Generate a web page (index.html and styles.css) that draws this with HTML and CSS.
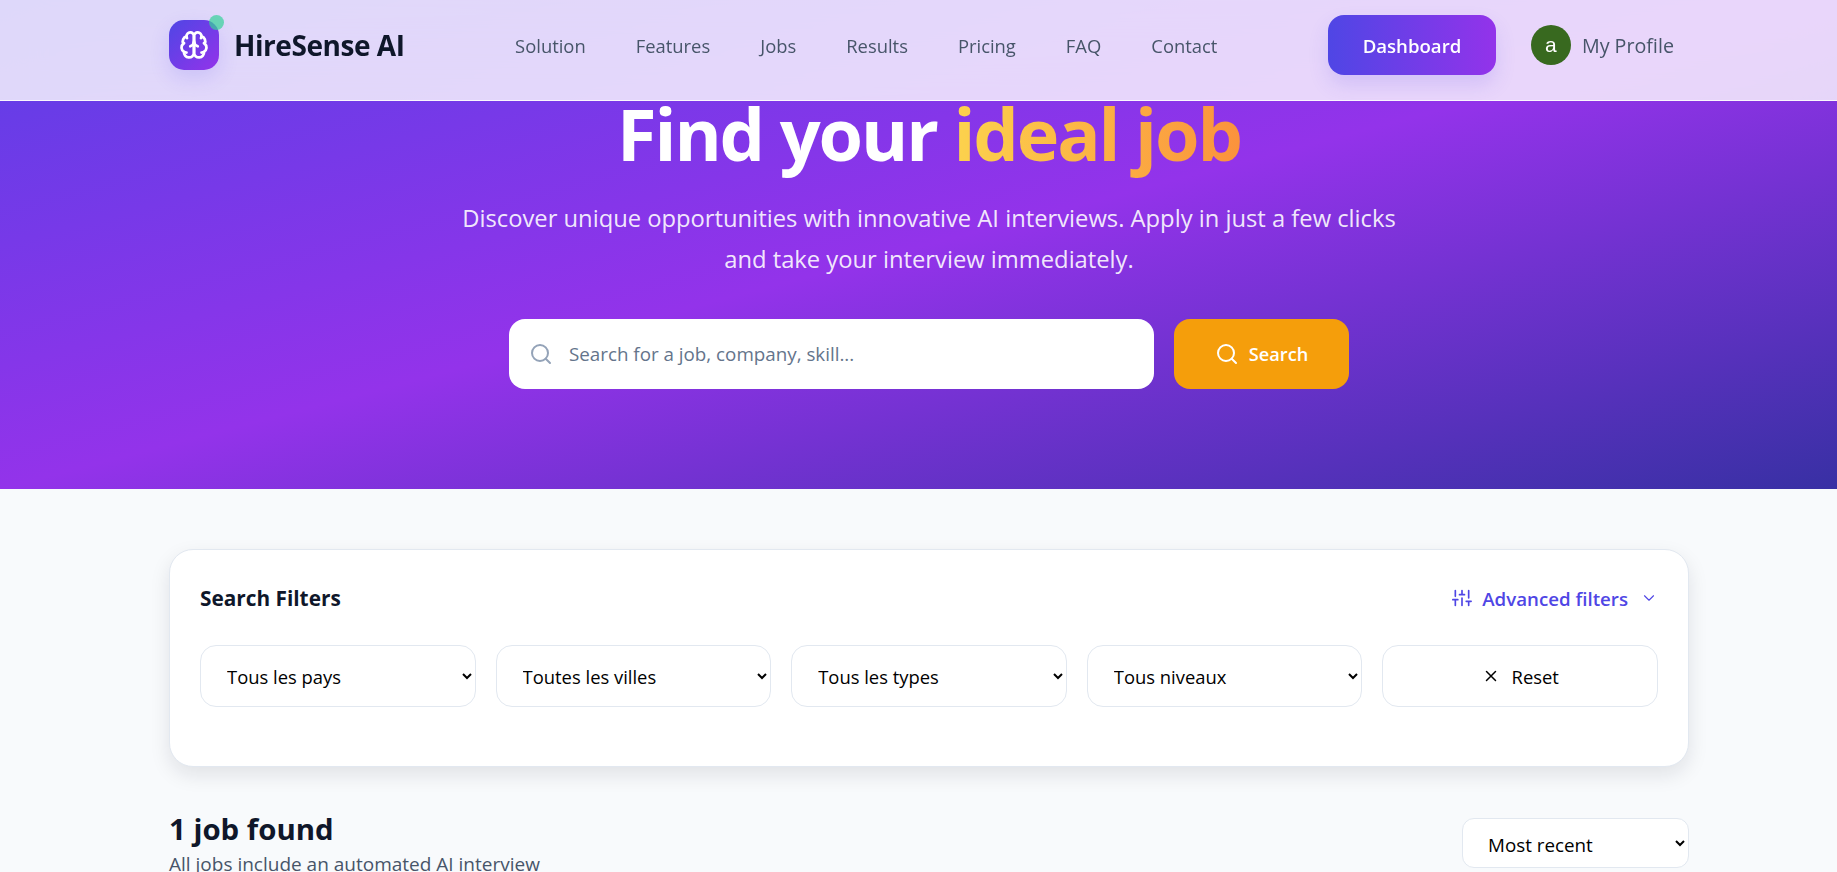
FILE: index.html
```html
<!DOCTYPE html>
<html lang="en">

<head>
    <meta charset="UTF-8">
    <title>HireSense AI - Jobs</title>
    <link rel="stylesheet" href="styles.css">
</head>

<body>
    <div class="page">
        <header class="navbar">
            <div class="nav-inner">
                <a class="brand" href="#">
                    <span class="brand-icon">
                        <svg class="brand-brain" viewBox="0 0 24 24">
                            <path d="M12 5a3 3 0 1 0-5.997.125 4 4 0 0 0-2.526 5.77 4 4 0 0 0 .556 6.588A4 4 0 1 0 12 18Z" />
                            <path d="M12 5a3 3 0 1 1 5.997.125 4 4 0 0 1 2.526 5.77 4 4 0 0 1-.556 6.588A4 4 0 1 1 12 18Z" />
                            <path d="M15 13a4.5 4.5 0 0 1-3-4 4.5 4.5 0 0 1-3 4" />
                            <path d="M17.599 6.5a3 3 0 0 0 .399-1.375" />
                            <path d="M6.003 5.125A3 3 0 0 0 6.401 6.5" />
                            <path d="M3.477 10.896a4 4 0 0 1 .585-.396" />
                            <path d="M19.938 10.5a4 4 0 0 1 .585.396" />
                            <path d="M6 18a4 4 0 0 1-1.967-.516" />
                            <path d="M19.967 17.484A4 4 0 0 1 18 18" />
                        </svg>
                        <span class="brand-dot"></span>
                    </span>
                    <span class="brand-name">HireSense AI</span>
                </a>
                <nav class="nav-links">
                    <a href="#">Solution</a>
                    <a href="#">Features</a>
                    <a href="#">Jobs</a>
                    <a href="#">Results</a>
                    <a href="#">Pricing</a>
                    <a href="#">FAQ</a>
                    <a href="#">Contact</a>
                </nav>
                <div class="nav-actions">
                    <a class="dashboard-btn" href="#">Dashboard</a>
                    <a class="profile" href="#">
                        <span class="avatar">a</span>
                        <span>My Profile</span>
                    </a>
                </div>
            </div>
        </header>

        <section class="hero">
            <h1>Find your <span class="hero-accent">ideal job</span></h1>
            <p>Discover unique opportunities with innovative AI interviews. Apply in just a few clicks and take your interview immediately.</p>
            <div class="search-row">
                <label class="search-box">
                    <svg class="icon search-box-icon" viewBox="0 0 24 24">
                        <circle cx="11" cy="11" r="8" />
                        <path d="m21 21-4.3-4.3" />
                    </svg>
                    <input type="text" placeholder="Search for a job, company, skill...">
                </label>
                <button class="search-btn">
                    <svg class="icon" viewBox="0 0 24 24">
                        <circle cx="11" cy="11" r="8" />
                        <path d="m21 21-4.3-4.3" />
                    </svg>
                    Search
                </button>
            </div>
        </section>

        <main class="content">
            <section class="filters-card">
                <div class="filters-head">
                    <h3>Search Filters</h3>
                    <button class="advanced-btn">
                        <svg class="icon" viewBox="0 0 24 24">
                            <path d="M4 21v-7M4 10V3M12 21v-9M12 8V3M20 21v-5M20 12V3M1 14h6M9 8h6M17 16h6" />
                        </svg>
                        Advanced filters
                        <svg class="icon chevron" viewBox="0 0 24 24">
                            <path d="m6 9 6 6 6-6" />
                        </svg>
                    </button>
                </div>
                <div class="filters-grid">
                    <select class="filter-control"><option>Tous les pays</option></select>
                    <select class="filter-control"><option>Toutes les villes</option></select>
                    <select class="filter-control"><option>Tous les types</option></select>
                    <select class="filter-control"><option>Tous niveaux</option></select>
                    <button class="filter-control reset-btn">
                        <svg class="icon" viewBox="0 0 24 24">
                            <path d="M18 6 6 18M6 6l12 12" />
                        </svg>
                        Reset
                    </button>
                </div>
            </section>

            <section class="results-head">
                <div>
                    <h2>1 job found</h2>
                    <p>All jobs include an automated AI interview</p>
                </div>
                <select class="sort-select"><option>Most recent</option></select>
            </section>
        </main>
    </div>
</body>

</html>
```

FILE: styles.css
```css
* {
    box-sizing: border-box;
}

html,
body {
    margin: 0;
    height: 872px;
    overflow: hidden;
}

body {
    background-color: #f8fafc;
    color: #0f172a;
    font-family: "Open Sans", "Noto Sans", sans-serif;
}

a {
    color: inherit;
    text-decoration: none;
}

.page {
    width: 1858px;
    position: relative;
}

.icon {
    width: 20px;
    height: 20px;
    fill: none;
    stroke: currentColor;
    stroke-width: 2;
    stroke-linecap: round;
    stroke-linejoin: round;
    flex-shrink: 0;
}

/* navbar */
.navbar {
    position: absolute;
    top: 0;
    left: 0;
    right: 0;
    z-index: 10;
    height: 101px;
    background-color: rgba(255, 255, 255, 0.8);
    backdrop-filter: blur(20px);
    border-bottom: 1px solid rgba(255, 255, 255, 0.8);
}

.nav-inner {
    width: 1520px;
    height: 100%;
    margin: 0 auto;
    padding-right: 15px;
    padding-bottom: 10px;
    display: flex;
    align-items: center;
    justify-content: space-between;
}

.brand {
    display: flex;
    align-items: center;
    gap: 15px;
}

.brand-icon {
    position: relative;
    width: 50px;
    height: 50px;
    border-radius: 15px;
    background: linear-gradient(135deg, #4f46e5, #9333ea);
    box-shadow: 0 8px 20px rgba(79, 70, 229, 0.15);
    display: flex;
    align-items: center;
    justify-content: center;
}

.brand-brain {
    width: 30px;
    height: 30px;
    fill: none;
    stroke: #fff;
    stroke-width: 2.2;
    stroke-linecap: round;
    stroke-linejoin: round;
}

.brand-dot {
    position: absolute;
    top: -5px;
    right: -5px;
    width: 15px;
    height: 15px;
    border-radius: 50%;
    background-color: #34d399;
    opacity: 0.7;
}

.brand-name {
    font-size: 28px;
    font-weight: 700;
    letter-spacing: -0.45px;
}

.nav-links {
    display: flex;
    gap: 50px;
    font-size: 18.4px;
    font-weight: 500;
    color: #475569;
}

.nav-actions {
    display: flex;
    align-items: center;
    gap: 35px;
}

.dashboard-btn {
    width: 168px;
    height: 60px;
    border-radius: 16px;
    background: linear-gradient(90deg, #4f46e5, #9333ea);
    box-shadow: 0 10px 20px rgba(79, 70, 229, 0.15);
    color: #fff;
    font-size: 18.6px;
    font-weight: 600;
    display: flex;
    align-items: center;
    justify-content: center;
}

.profile {
    display: flex;
    align-items: center;
    gap: 11px;
    font-size: 19.7px;
    font-weight: 500;
    color: #475569;
}

.avatar {
    width: 40px;
    height: 40px;
    border-radius: 50%;
    background-color: #38691f;
    color: #fff;
    font-family: "Liberation Sans", sans-serif;
    font-size: 21px;
    display: flex;
    align-items: center;
    justify-content: center;
}

/* hero */
.hero {
    height: 489px;
    padding-top: 93px;
    background: linear-gradient(to bottom right, #5b3fe6 0%, #9333ea 50%, #3730a3 100%);
    color: #fff;
    text-align: center;
}

.hero h1 {
    margin: 0;
    font-size: 72px;
    line-height: 80px;
    font-weight: 700;
    letter-spacing: -2.1px;
}

.hero-accent {
    background: linear-gradient(90deg, #fcd34d, #fb923c);
    -webkit-background-clip: text;
    background-clip: text;
    color: transparent;
}

.hero p {
    width: 960px;
    margin: 25px auto 0;
    font-size: 23.75px;
    line-height: 41px;
    color: rgba(255, 255, 255, 0.9);
}

.search-row {
    width: 840px;
    margin: 39px auto 0;
    display: flex;
    gap: 20px;
}

.search-box {
    flex: 1;
    height: 70px;
    padding: 0 20px;
    border-radius: 16px;
    background-color: #fff;
    display: flex;
    align-items: center;
    gap: 16px;
}

.search-box-icon {
    width: 24px;
    height: 24px;
    color: #94a3b8;
}

.search-box input {
    flex: 1;
    border: none;
    outline: none;
    padding: 0;
    font-family: inherit;
    font-size: 18.8px;
}

.search-box input::placeholder {
    color: #64748b;
}

.search-btn {
    width: 175px;
    height: 70px;
    border: none;
    border-radius: 16px;
    background-color: #f59e0b;
    color: #fff;
    font-family: inherit;
    font-size: 18.2px;
    font-weight: 600;
    display: flex;
    align-items: center;
    justify-content: center;
    gap: 10px;
}

.search-btn .icon {
    width: 24px;
    height: 24px;
}

/* filters */
.content {
    width: 1520px;
    margin: 0 auto;
    padding-top: 60px;
}

.filters-card {
    height: 218px;
    padding: 30px;
    border: 1px solid #e2e8f0;
    border-radius: 24px;
    background-color: #fff;
    box-shadow: 0 8px 20px rgba(15, 23, 42, 0.1);
}

.filters-head {
    display: flex;
    align-items: center;
    justify-content: space-between;
    height: 36px;
}

.filters-head h3 {
    margin: 0;
    font-size: 20.8px;
    font-weight: 700;
}

.advanced-btn {
    padding: 0;
    border: none;
    background: none;
    color: #4f46e5;
    font-family: inherit;
    font-size: 18.7px;
    font-weight: 600;
    display: flex;
    align-items: center;
    gap: 10px;
}

.chevron {
    width: 18px;
    height: 18px;
    margin-left: 2px;
    stroke-width: 1.5;
}

.filters-grid {
    margin-top: 29px;
    display: grid;
    grid-template-columns: repeat(5, 1fr);
    gap: 20px;
}

.filter-control {
    height: 62px;
    padding: 0 0 0 22px;
    border: 1px solid #e2e8f0;
    border-radius: 16px;
    background-color: #fff;
    color: #000;
    font-family: inherit;
    font-size: 18.4px;
}

.reset-btn {
    padding: 0;
    display: flex;
    align-items: center;
    justify-content: center;
    gap: 12px;
}

.reset-btn .icon {
    width: 18px;
    height: 18px;
}

/* results */
.results-head {
    margin-top: 42px;
    display: flex;
    align-items: flex-start;
    justify-content: space-between;
}

.results-head h2 {
    margin: 0;
    font-size: 29.4px;
    line-height: 40px;
    font-weight: 700;
}

.results-head p {
    margin: 2px 0 0;
    font-size: 19px;
    line-height: 26px;
    color: #475569;
}

.sort-select {
    width: 227px;
    height: 50px;
    margin-top: 9px;
    padding: 3px 0 0 21px;
    border: 1px solid #e2e8f0;
    border-radius: 12px;
    background-color: #fff;
    color: #000;
    font-family: inherit;
    font-size: 18.8px;
}
```
